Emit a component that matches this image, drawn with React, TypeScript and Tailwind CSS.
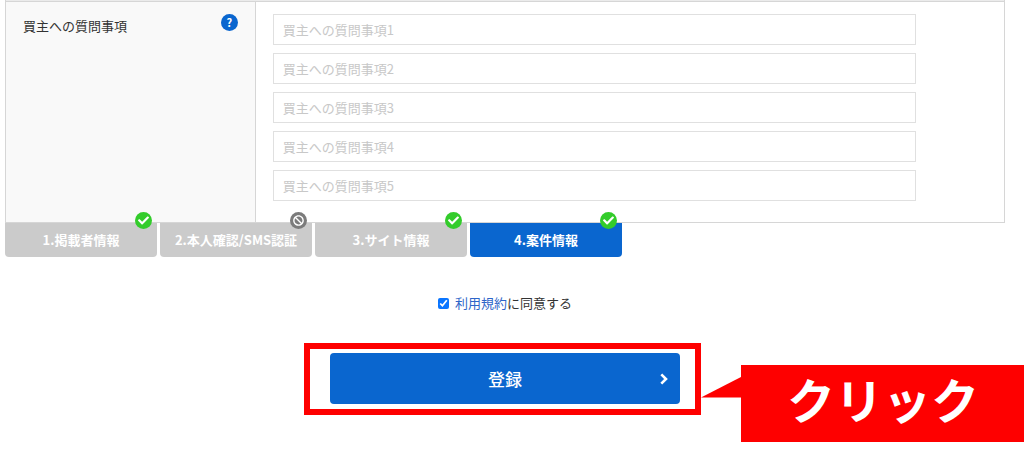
import { FaBan, FaCheck } from "react-icons/fa";
import clsx from "clsx";

const questions = [1, 2, 3, 4, 5];

const steps = [
  { label: "1.掲載者情報", done: true, active: false },
  { label: "2.本人確認/SMS認証", done: false, active: false },
  { label: "3.サイト情報", done: true, active: false },
  { label: "4.案件情報", done: true, active: true },
];

const StepTab = (props: any) => {
  const { label, done, active } = props.step;

  return (
    <button
      type="button"
      className={clsx(
        "relative h-[34px] w-[152px] rounded-b text-[13px] font-bold whitespace-nowrap text-white",
        active ? "bg-[#0a66cf]" : "bg-[#cbcbcb]"
      )}
    >
      {label}
      <span
        className={clsx(
          "absolute -top-[11px] right-[5px] flex h-[17px] w-[17px] items-center justify-center rounded-full",
          done ? "bg-[#33cc2b]" : "bg-[#7b7b7b]"
        )}
      >
        {done ? <FaCheck className="h-[11px] w-[11px]" /> : <FaBan className="h-[11px] w-[11px]" />}
      </span>
    </button>
  );
};

const App = () => {
  return (
    <div className="overflow-x-hidden bg-white pr-[19px] pb-12 pl-[5px] font-['Noto_Sans_CJK_JP',sans-serif] text-[13px] text-[#333]">
      <div className="h-px border-x border-[#d6d6d6] bg-[#ebebeb]" />
      <table className="w-full border-collapse">
        <tbody>
          <tr>
            <th className="w-1/4 border border-[#d6d6d6] bg-[#f9f9f9] px-[17px] py-3 text-left align-top font-normal">
              <div className="flex items-start justify-between">
                <span className="leading-6">買主への質問事項</span>
                <button
                  type="button"
                  aria-label="ヘルプ"
                  className="flex h-[17px] w-[17px] items-center justify-center rounded-full bg-[#0a66cf] text-[11px] leading-none font-bold text-white"
                >
                  ?
                </button>
              </div>
            </th>
            <td className="border border-[#d6d6d6] px-[17px] pt-3 pb-[21px] align-top">
              <div className="flex flex-col gap-2">
                {questions.map((n) => (
                  <input
                    key={n}
                    type="text"
                    aria-label={`買主への質問事項${n}`}
                    placeholder={`買主への質問事項${n}`}
                    className="h-[31px] w-9/10 border border-[#e0e0e0] bg-white px-[9px] placeholder:text-[#c8c8c8]"
                  />
                ))}
              </div>
            </td>
          </tr>
        </tbody>
      </table>

      <div className="flex gap-[3px]">
        {steps.map((step) => (
          <StepTab key={step.label} step={step} />
        ))}
      </div>

      <div className="mt-9 flex items-center justify-center gap-[6px] leading-5">
        <input id="agree" type="checkbox" defaultChecked className="h-[11px] w-[11px] accent-[#0a75ff]" />
        <label htmlFor="agree">
          <a href="#terms" className="text-[#2d65c8]">利用規約</a>に同意する
        </label>
      </div>

      <div className="relative mx-auto mt-10 w-[350px]">
        <button
          type="submit"
          className="relative h-[51px] w-full rounded bg-[#0a66cf] text-[17px] font-medium text-white"
        >
          登録
          <svg
            viewBox="0 0 8 12"
            className="absolute top-5 right-3 h-3 w-2"
            fill="none"
            stroke="currentColor"
            strokeWidth="2.6"
          >
            <path d="M1.3 1.3 6 6 1.3 10.7" />
          </svg>
        </button>
        <div className="pointer-events-none absolute -top-[10px] -right-[21px] -bottom-[11px] -left-[26px] border-6 border-[#fe0000]" />
        <div className="absolute top-3 left-full ml-[61px] flex h-[77px] w-[284px] items-center justify-center bg-[#fe0000] pb-3 text-5xl leading-none font-bold text-white">
          <svg viewBox="0 0 40 21" className="absolute top-3 right-full h-[21px] w-10" fill="#fe0000">
            <path d="M0 20.5 40 0V20.5Z" />
          </svg>
          クリック
        </div>
      </div>
    </div>
  );
};

export default App;
